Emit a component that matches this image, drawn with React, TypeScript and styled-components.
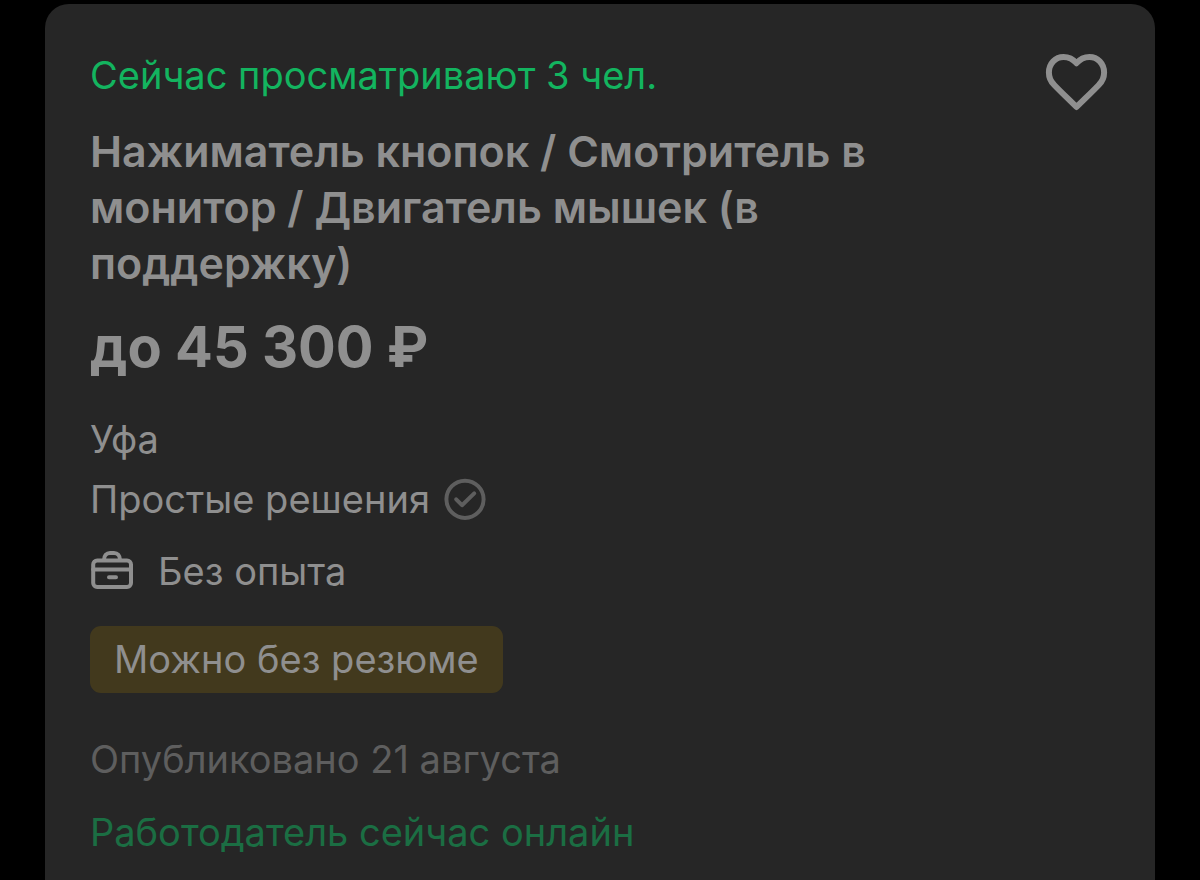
import React from "react";
import styled, { createGlobalStyle } from "styled-components";

const GlobalStyle = createGlobalStyle`
  body {
    margin: 0;
    background: #000;
    font-family: Inter, "Noto Sans", sans-serif;
    color: #8f8f8f;
  }
`;

const Page = styled.main`
  padding: 4px 45px 0;
`;

const Card = styled.article`
  display: flex;
  align-items: flex-start;
  justify-content: space-between;
  box-sizing: border-box;
  min-height: calc(100vh - 4px);
  padding: 47px 46px 0 45px;
  background: #262626;
  border-radius: 24px 24px 0 0;
`;

const Details = styled.div`
  display: flex;
  flex-direction: column;
  align-items: flex-start;
  max-width: 800px;
`;

const Line = styled.p<{ $color?: string; $top?: number }>`
  display: flex;
  align-items: center;
  gap: 14px;
  margin: ${(p) => p.$top ?? 0}px 0 0;
  font-size: 38px;
  line-height: 48px;
  color: ${(p) => p.$color ?? "#8f8f8f"};
`;

const Title = styled.h2`
  margin: 24px 0 0;
  font-size: 43px;
  line-height: 56px;
  font-weight: 600;
`;

const Salary = styled.p`
  margin: 24px 0 0;
  font-size: 56px;
  line-height: 64px;
  font-weight: 700;
`;

const Experience = styled(Line)`
  gap: 24px;
`;

const Tag = styled.span`
  margin-top: 31px;
  padding: 9px 24px 10px;
  font-size: 38px;
  line-height: 48px;
  background: #42391d;
  border-radius: 11px;
`;

const FavoriteButton = styled.button`
  display: flex;
  margin: 0;
  padding: 0;
  border: 0;
  background: none;
  color: inherit;
  cursor: pointer;
`;

const HeartIcon = () => (
  <svg width="64" height="62" viewBox="0 -1 64 62" fill="none" stroke="currentColor" strokeWidth="6" strokeLinejoin="round" aria-hidden="true">
    <path d="M31.5 11.2C28 7 23 4.9 18.5 4.9C10.5 4.9 3.9 11.5 3.9 20.5C3.9 25.5 5.8 29.5 9 32.7C15.5 39.5 24 47.5 31.5 55C39 47.5 47.5 39.5 54 32.7C57.2 29.5 59.1 25.5 59.1 20.5C59.1 11.5 52.5 4.9 44.5 4.9C40 4.9 35 7 31.5 11.2Z" />
  </svg>
);

const VerifiedIcon = () => (
  <svg width="42" height="42" viewBox="0 0 42 42" fill="none" stroke="#5e5e5e" strokeWidth="4" strokeLinecap="round" strokeLinejoin="round" aria-hidden="true">
    <circle cx="21" cy="21.3" r="18.6" />
    <path d="M12.2 21.3L18 27.2L30.2 15.4" />
  </svg>
);

const BriefcaseIcon = () => (
  <svg width="44" height="44" viewBox="0 -1 44 44" fill="none" stroke="currentColor" strokeWidth="4" strokeLinecap="round" strokeLinejoin="round" aria-hidden="true">
    <rect x="3.2" y="10.5" width="37.8" height="26.5" rx="4" />
    <path d="M14 10C14 5.500 16.500 2.900 20 2.900H24C27.500 2.900 30 5.500 30 10M3.200 19.500H41M19 27.200H26" />
  </svg>
);

export default function App() {
  return (
    <>
      <GlobalStyle />
      <Page>
        <Card>
          <Details>
            <Line $color="#13b45f">Сейчас просматривают 3 чел.</Line>
            <Title>Нажиматель кнопок / Смотритель в монитор / Двигатель мышек (в поддержку)</Title>
            <Salary>до 45 300 ₽</Salary>
            <Line $top={36}>Уфа</Line>
            <Line $top={12}>
              Простые решения
              <VerifiedIcon />
            </Line>
            <Experience $top={24}>
              <BriefcaseIcon />
              Без опыта
            </Experience>
            <Tag>Можно без резюме</Tag>
            <Line $top={42} $color="#5e5e5e">Опубликовано 21 августа</Line>
            <Line $top={25} $color="#1b6e43">Работодатель сейчас онлайн</Line>
          </Details>
          <FavoriteButton type="button" aria-label="Добавить в избранное">
            <HeartIcon />
          </FavoriteButton>
        </Card>
      </Page>
    </>
  );
}
